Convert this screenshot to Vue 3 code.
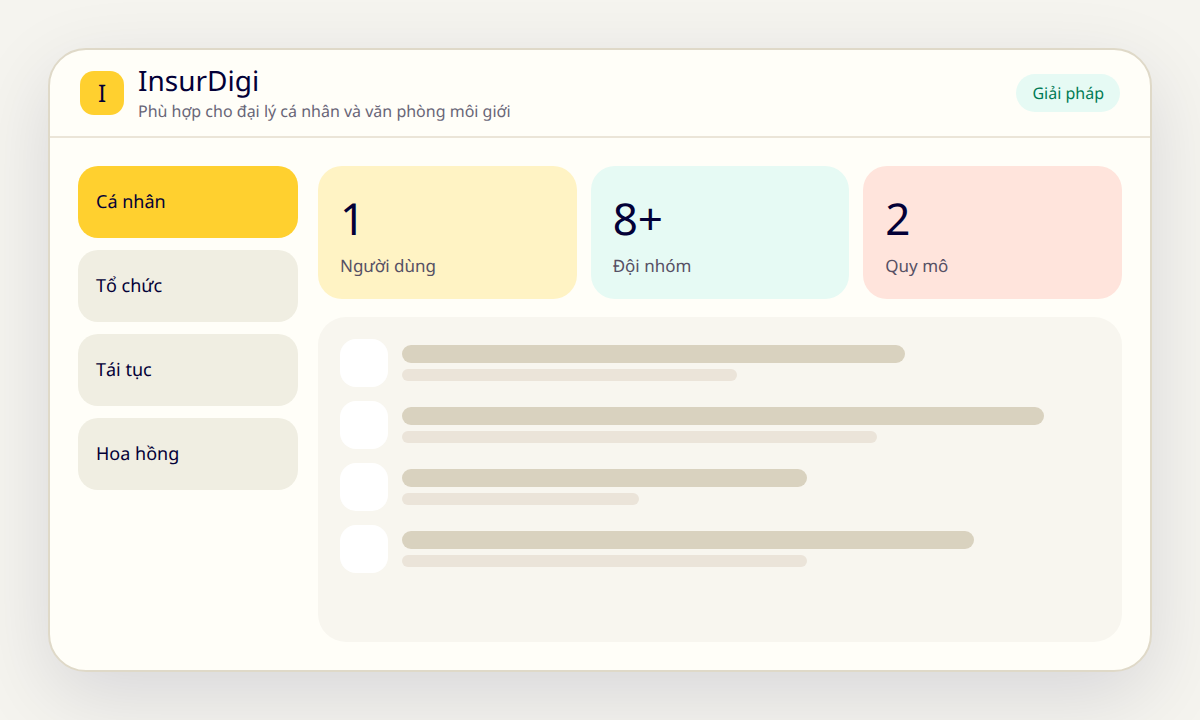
<script setup>
const tabs = ['Cá nhân', 'Tổ chức', 'Tái tục', 'Hoa hồng']
const stats = [
  { value: '1', label: 'Người dùng', tone: 'yellow' },
  { value: '8+', label: 'Đội nhóm', tone: 'mint' },
  { value: '2', label: 'Quy mô', tone: 'coral' },
]
const rows = [
  [72, 48],
  [92, 68],
  [58, 34],
  [82, 58],
]
</script>

<template>
  <div class="page">
    <main class="window">
      <header class="top">
        <div class="logo">I</div>
        <div class="titles">
          <h1>InsurDigi</h1>
          <p>Phù hợp cho đại lý cá nhân và văn phòng môi giới</p>
        </div>
        <span class="pill">Giải pháp</span>
      </header>
      <div class="body">
        <nav class="side">
          <button v-for="(tab, i) in tabs" :key="tab" type="button" class="tab" :class="{ active: i === 0 }">{{ tab }}</button>
        </nav>
        <section class="content">
          <div class="stats">
            <article v-for="s in stats" :key="s.label" class="stat" :class="s.tone">
              <strong>{{ s.value }}</strong>
              <span>{{ s.label }}</span>
            </article>
          </div>
          <div class="panel">
            <div v-for="(row, i) in rows" :key="i" class="row">
              <div class="thumb"></div>
              <div class="lines">
                <div class="line" :style="{ width: row[0] + '%' }"></div>
                <div class="line thin" :style="{ width: row[1] + '%' }"></div>
              </div>
            </div>
          </div>
        </section>
      </div>
    </main>
  </div>
</template>

<style>
body {
  margin: 0;
}
</style>

<style scoped>
.page {
  box-sizing: border-box;
  min-height: 100vh;
  padding: 48px;
  display: flex;
  overflow: hidden;
  background: #f5f4ef;
  color: #030037;
  font-family: "Noto Sans", sans-serif;
  font-kerning: none;
  text-rendering: geometricPrecision;
}
.window {
  flex: 1;
  display: flex;
  flex-direction: column;
  border: 2px solid #dfd9c8;
  border-radius: 38px;
  background: #fffef8;
  box-shadow: 0 24px 80px rgba(3, 0, 55, 0.12);
  overflow: hidden;
}
.top {
  box-sizing: border-box;
  height: 88px;
  padding: 0 30px;
  display: flex;
  align-items: center;
  gap: 14px;
  border-bottom: 2px solid #ebe5d8;
}
.logo {
  width: 44px;
  height: 44px;
  border-radius: 14px;
  display: grid;
  place-items: center;
  background: #ffd02f;
  font-size: 24px;
}
.titles {
  flex: 1;
}
h1 {
  margin: 0;
  font-size: 28px;
  line-height: 36px;
  font-weight: 400;
}
p {
  margin: 0;
  font-size: 16px;
  line-height: 24px;
  color: #686577;
}
.pill {
  padding: 8px 16px;
  border-radius: 19px;
  background: #e6faf4;
  color: #007a55;
  font-size: 16px;
  line-height: 22px;
}
.body {
  flex: 1;
  padding: 28px;
  display: grid;
  grid-template-columns: 220px 1fr;
  gap: 20px;
}
.side {
  display: flex;
  flex-direction: column;
  gap: 12px;
}
.tab {
  height: 72px;
  padding: 0 18px;
  border: 0;
  border-radius: 20px;
  background: #f0eee2;
  color: inherit;
  font: inherit;
  font-size: 18px;
  font-kerning: none;
  text-rendering: inherit;
  text-align: left;
}
.tab.active {
  background: #ffd02f;
}
.content {
  display: flex;
  flex-direction: column;
  gap: 18px;
}
.stats {
  display: grid;
  grid-template-columns: repeat(3, 1fr);
  gap: 14px;
}
.stat {
  padding: 22px;
  display: flex;
  flex-direction: column;
  gap: 6px;
  border-radius: 24px;
}
.stat strong {
  font-size: 44px;
  line-height: 60px;
  font-weight: 400;
}
.stat span {
  font-size: 17px;
  line-height: 23px;
  color: #565064;
}
.yellow {
  background: #fff3c4;
}
.mint {
  background: #e6faf4;
}
.coral {
  background: #ffe4dc;
}
.panel {
  flex: 1;
  padding: 22px;
  display: flex;
  flex-direction: column;
  gap: 14px;
  border-radius: 28px;
  background: #f8f6ef;
}
.row {
  display: flex;
  align-items: center;
  gap: 14px;
}
.thumb {
  width: 48px;
  height: 48px;
  border-radius: 16px;
  background: #fff;
}
.lines {
  flex: 1;
  display: flex;
  flex-direction: column;
  gap: 6px;
}
.line {
  height: 18px;
  border-radius: 9px;
  background: #d9d2bf;
}
.line.thin {
  height: 12px;
  border-radius: 6px;
  background: #ebe4d9;
}
</style>
